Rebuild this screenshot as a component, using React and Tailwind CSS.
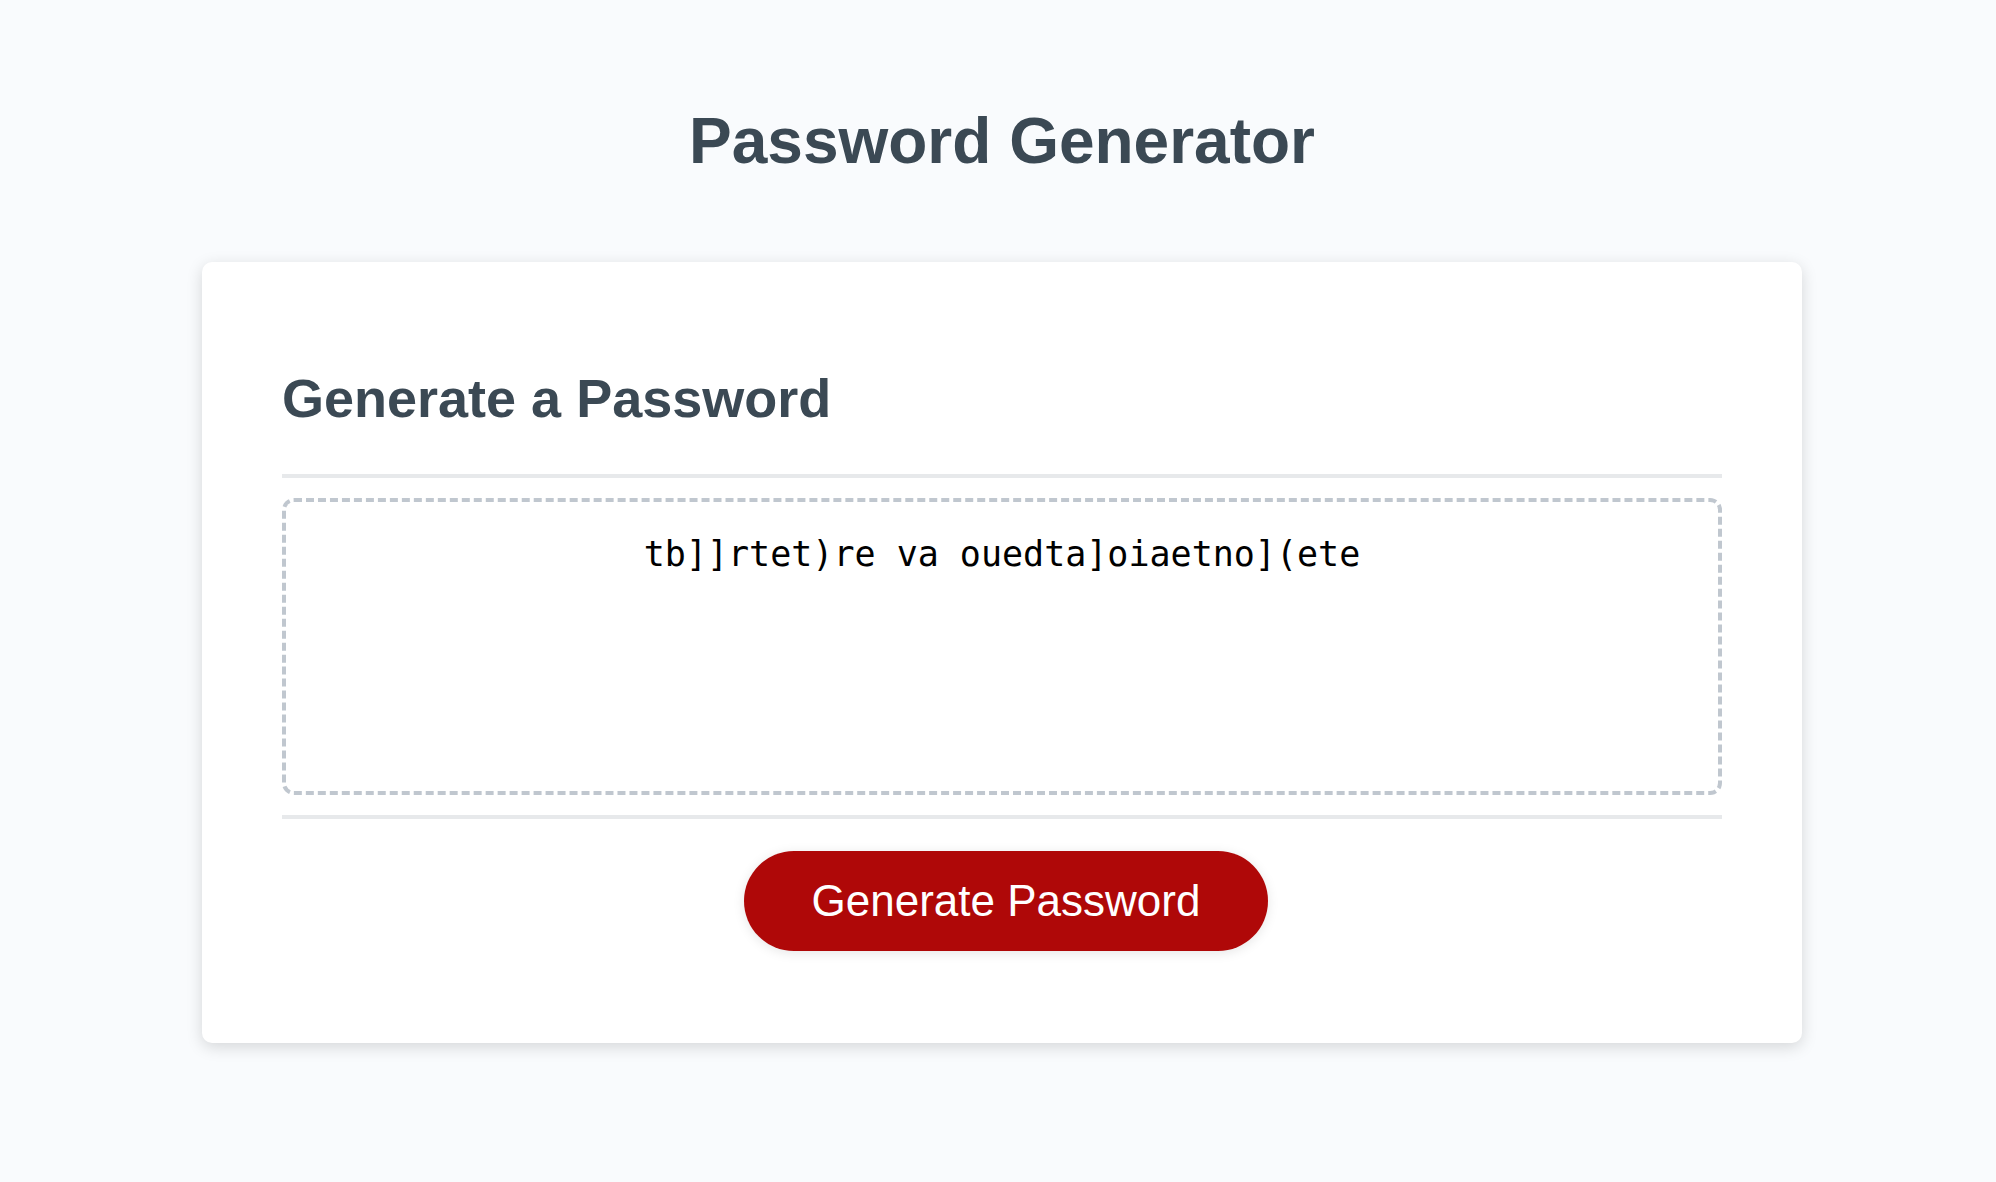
export default function App() {
  return (
    <div className="min-h-screen bg-[#f9fbfd] pt-[62px] pl-[48px] pr-[40px] font-['Liberation_Sans',Arial,sans-serif]">
      <header className="text-center pb-[40px] text-[#3b4954]">
        <h1 className="text-[64px] font-bold leading-[73.6px] my-[43px]">Password Generator</h1>
      </header>
      <div className="mx-auto max-w-[1600px] bg-white rounded-[10px] shadow-[0_4px_16px_0_rgba(0,0,0,0.15)] text-[#3b4954] px-[80px] py-[60px]">
        <div>
          <h2 className="text-[54px] font-bold leading-[62px] my-[45px]">Generate a Password</h2>
          <div className="h-[4px] bg-[#e7e9eb]" />
        </div>
        <div className="min-h-[200px]">
          <textarea
            readOnly
            value="tb]]rtet)re va ouedta]oiaetno](ete"
            className="block w-full h-[297px] my-[20px] pt-[30px] px-[30px] pb-[170px] border-[4px] border-dashed border-[#c0c7cf] rounded-[12px] text-center text-black font-['DejaVu_Sans_Mono',monospace] text-[35px] leading-[44px] resize-none overflow-hidden outline-none bg-white"
          />
        </div>
        <div>
          <div className="h-[4px] bg-[#e7e9eb]" />
          <div className="flex justify-center">
            <button className="mt-[32px] mb-[32px] mr-[32px] ml-[40px] bg-[#af0808] text-white rounded-[50px] text-[44px] leading-[44px] py-[28px] px-[68px] shadow-[0_2px_12px_0_rgba(0,0,0,0.1)] cursor-pointer">
              Generate Password
            </button>
          </div>
        </div>
      </div>
    </div>
  );
}
